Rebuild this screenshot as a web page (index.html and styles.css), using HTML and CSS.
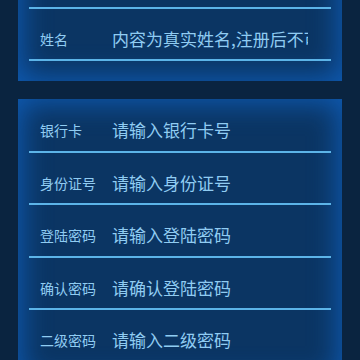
FILE: index.html
```html
<!DOCTYPE html>
<html lang="zh-CN">
<head>
    <meta charset="UTF-8">
    <meta name="viewport" content="width=device-width, initial-scale=1.0">
    <title>注册</title>
    <link rel="stylesheet" href="styles.css">
</head>
<body>
    <main class="page">

        <section class="card card-top">
            <div class="row row-hidden"></div>
            <div class="row">
                <label class="label">姓名</label>
                <input class="field" type="text" placeholder="内容为真实姓名,注册后不可修改">
            </div>
        </section>

        <section class="card">
            <div class="row">
                <label class="label">银行卡</label>
                <input class="field" type="text" placeholder="请输入银行卡号">
            </div>
            <div class="row">
                <label class="label">身份证号</label>
                <input class="field" type="text" placeholder="请输入身份证号">
            </div>
            <div class="row">
                <label class="label">登陆密码</label>
                <input class="field" type="password" placeholder="请输入登陆密码">
            </div>
            <div class="row">
                <label class="label">确认密码</label>
                <input class="field" type="password" placeholder="请确认登陆密码">
            </div>
            <div class="row">
                <label class="label">二级密码</label>
                <input class="field" type="password" placeholder="请输入二级密码">
            </div>
        </section>

    </main>
</body>
</html>
```

FILE: styles.css
```css
*{ padding: 0; margin: 0; box-sizing: border-box; }

:root{
    --bg: #0a2440;
    --card: #0b3563;
    --glow: #0e5ab2;
    --line: #5cb4e8;
    --text: #90ccf2;
}

body{
    background-color: var(--bg);
    font-family: "Noto Sans CJK SC", "Noto Sans", sans-serif;
    overflow: hidden;
}

.page{
    display: flex;
    flex-direction: column;
    gap: 18px;
    padding: 0 18px;
}

/*   CARDS   */

.card{
    background-color: var(--card);
    box-shadow: inset 0 0 28px 4px var(--glow);
    padding: 1px 11px 20px;
}
.card-top{ margin-top: -45px; }

.row{
    display: flex;
    align-items: center;
    height: 52.5px;
    padding: 20px 0 10.5px 11px;
    border-bottom: 2px solid var(--line);
}

.label{
    width: 72px;
    flex-shrink: 0;
    font-size: 14px;
    line-height: 20px;
    color: var(--text);
}

.field{
    width: 196px;
    background: transparent;
    border: none;
    outline: none;
    font-family: inherit;
    font-size: 17px;
    line-height: 20px;
    color: var(--text);
}
.field::placeholder{ color: var(--text); opacity: 1; }
```
